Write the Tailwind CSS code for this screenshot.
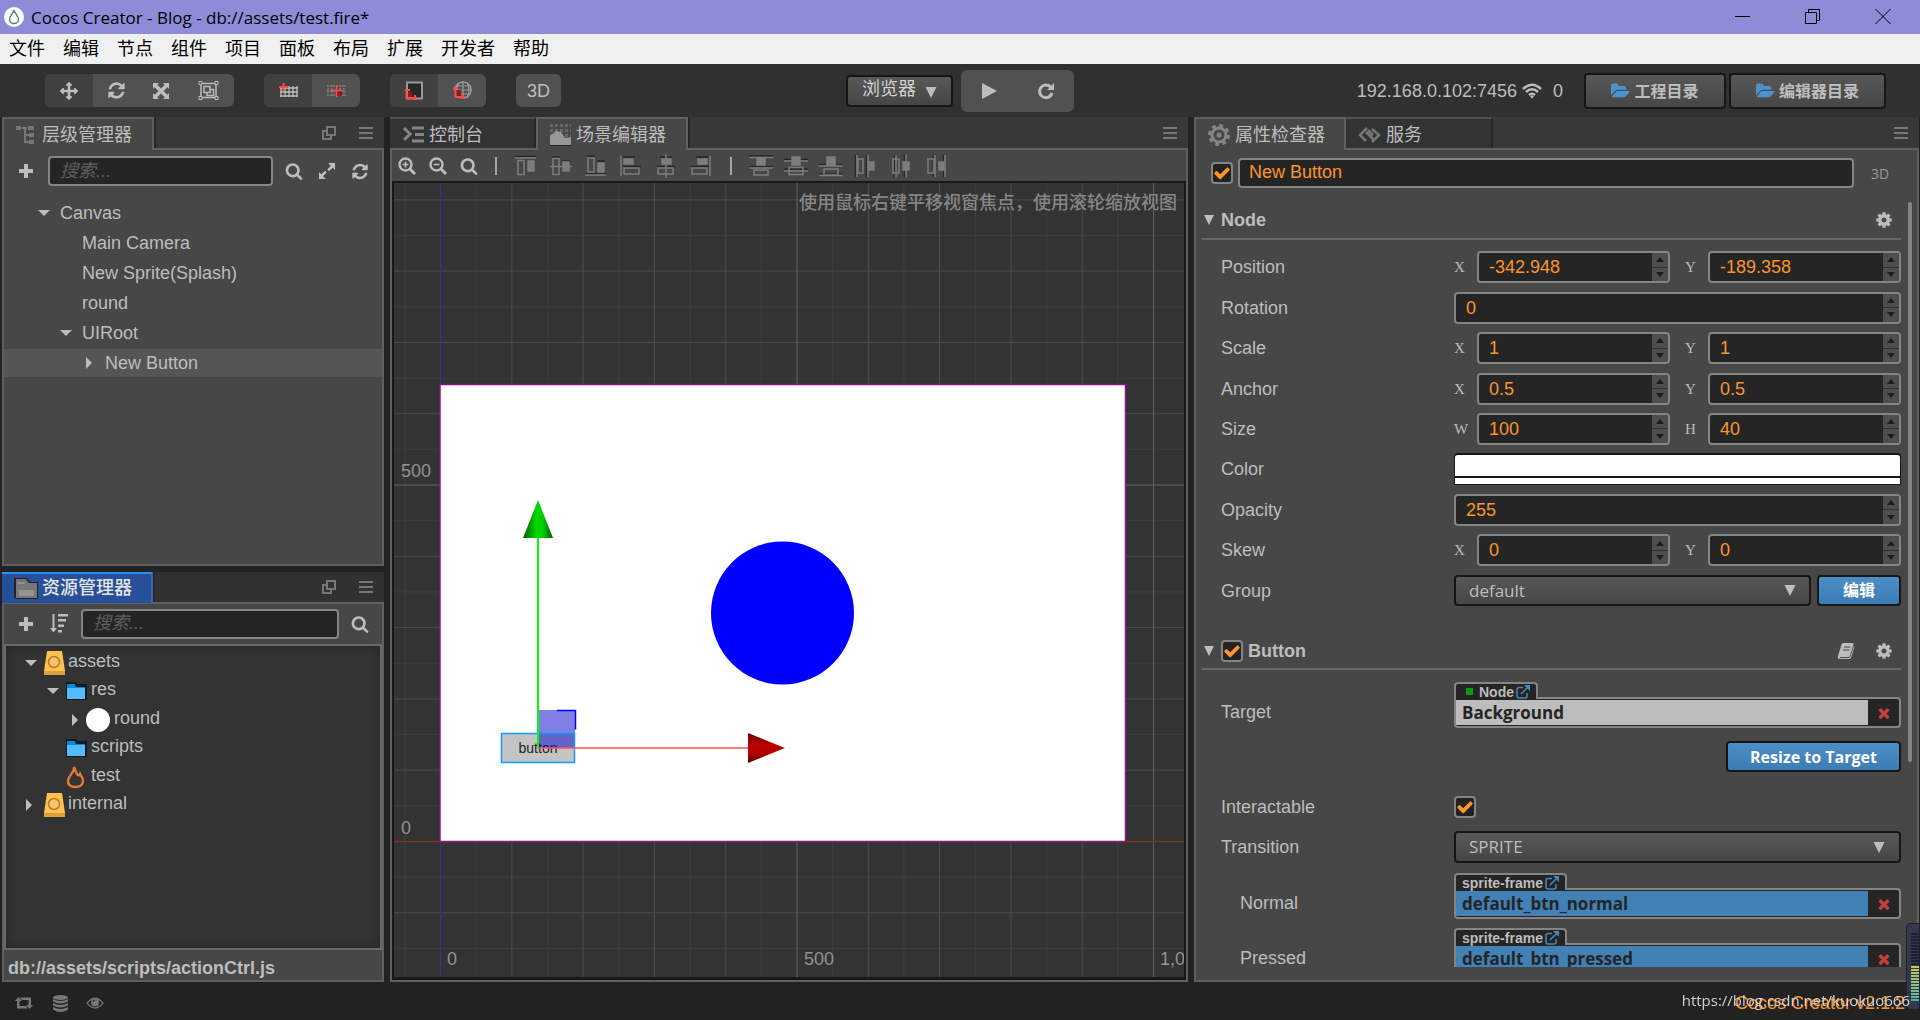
<!DOCTYPE html>
<html lang="zh-CN">
<head>
<meta charset="utf-8">
<title>Cocos Creator - Blog - db://assets/test.fire*</title>
<script src="https://cdn.jsdelivr.net/npm/@tailwindcss/browser@4"></script>
</head>
<body class="flex h-screen flex-col overflow-hidden bg-[#222] font-['Liberation_Sans','Noto_Sans_CJK_SC',sans-serif] text-[18px] leading-6 text-[#bdbdbd]">

<!-- Shared icons -->
<svg class="hidden" aria-hidden="true">
  <symbol id="i-arrows" viewBox="0 0 1792 1792"><path fill="currentColor" d="M1792 896q0 26-19 45l-256 256q-19 19-45 19t-45-19-19-45v-128h-384v384h128q26 0 45 19t19 45-19 45l-256 256q-19 19-45 19t-45-19l-256-256q-19-19-19-45t19-45 45-19h128v-384h-384v128q0 26-19 45t-45 19-45-19l-256-256q-19-19-19-45t19-45l256-256q19-19 45-19t45 19 19 45v128h384v-384h-128q-26 0-45-19t-19-45 19-45l256-256q19-19 45-19t45 19l256 256q19 19 19 45t-19 45-45 19h-128v384h384v-128q0-26 19-45t45-19 45 19l256 256q19 19 19 45z"/></symbol>
  <symbol id="i-refresh" viewBox="0 0 1792 1792"><path fill="currentColor" d="M1639 1056q0 5-1 7-64 268-268 434.5t-478 166.5q-146 0-282.5-55t-243.5-157l-129 129q-19 19-45 19t-45-19-19-45v-448q0-26 19-45t45-19h448q26 0 45 19t19 45-19 45l-137 137q71 66 161 102t187 36q134 0 250-65t186-179q11-17 53-117 8-23 30-23h192q13 0 22.5 9.5t9.5 22.5zm25-800v448q0 26-19 45t-45 19h-448q-26 0-45-19t-19-45 19-45l138-138q-148-137-349-137-134 0-250 65t-186 179q-11 17-53 117-8 23-30 23h-199q-13 0-22.5-9.5t-9.5-22.5v-7q65-268 270-434.5t480-166.5q146 0 284 55.5t245 156.5l130-129q19-19 45-19t45 19 19 45z"/></symbol>
  <symbol id="i-search" viewBox="0 0 1792 1792"><path fill="currentColor" d="M1216 832q0-185-131.5-316.5t-316.5-131.5-316.5 131.5-131.5 316.5 131.5 316.5 316.5 131.5 316.5-131.5 131.5-316.5zm512 832q0 52-38 90t-90 38q-54 0-90-38l-343-342q-179 124-399 124-143 0-273.5-55.5t-225-150-150-225-55.5-273.5 55.5-273.5 150-225 225-150 273.5-55.5 273.5 55.5 225 150 150 225 55.5 273.5q0 220-124 399l343 343q37 37 37 90z"/></symbol>
  <symbol id="i-gear" viewBox="0 0 1792 1792"><path fill="currentColor" d="M1152 896q0-106-75-181t-181-75-181 75-75 181 75 181 181 75 181-75 75-181zm512-109v222q0 12-8 23t-20 13l-185 28q-19 54-39 91 35 50 107 138 10 12 10 25t-9 23q-27 37-99 108t-94 71q-12 0-26-9l-138-108q-44 23-91 38-16 136-29 186-7 28-36 28h-222q-14 0-24.5-8.5t-11.5-21.5l-28-184q-49-16-90-37l-141 107q-10 9-25 9-14 0-25-11-126-114-165-168-7-10-7-23 0-12 8-23 15-21 51-66.5t54-70.5q-27-50-41-99l-183-27q-13-2-21-12.5t-8-23.5v-222q0-12 8-23t19-13l186-28q14-46 39-92-40-57-107-138-10-12-10-24 0-10 9-23 26-36 98.5-107.5t94.5-71.5q13 0 26 10l138 107q44-23 91-38 16-136 29-186 7-28 36-28h222q14 0 24.5 8.5t11.5 21.5l28 184q49 16 90 37l142-107q9-9 24-9 13 0 25 10 129 119 165 170 7 8 7 22 0 12-8 23-15 21-51 66.5t-54 70.5q26 50 41 98l183 28q13 2 21 12.5t8 23.5z"/></symbol>
  <symbol id="i-check" viewBox="0 0 1792 1792"><path fill="currentColor" d="M1671 566q0 40-28 68l-724 724-136 136q-28 28-68 28t-68-28l-136-136-362-362q-28-28-28-68t28-68l136-136q28-28 68-28t68 28l294 295 656-657q28-28 68-28t68 28l136 136q28 28 28 68z"/></symbol>
  <symbol id="i-open" viewBox="0 0 1920 1792"><path fill="currentColor" d="M1879 952q0 31-31 66l-336 396q-43 51-120.5 86.5t-143.5 35.5h-1088q-34 0-60.5-13t-26.5-43q0-31 31-66l336-396q43-51 120.5-86.5t143.5-35.5h1088q34 0 60.5 13t26.5 43zm-343-344v160h-832q-94 0-197 47.5t-164 119.5l-337 396-5 6q0-4-.5-12.5t-.5-12.5v-960q0-92 66-158t158-66h320q92 0 158 66t66 158v32h544q92 0 158 66t66 158z"/></symbol>
  <symbol id="i-times" viewBox="0 0 1792 1792"><path fill="currentColor" d="M1490 1322q0 40-28 68l-136 136q-28 28-68 28t-68-28l-294-294-294 294q-28 28-68 28t-68-28l-136-136q-28-28-28-68t28-68l294-294-294-294q-28-28-28-68t28-68l136-136q28-28 68-28t68 28l294 294 294-294q28-28 68-28t68 28l136 136q28 28 28 68t-28 68l-294 294 294 294q28 28 28 68z"/></symbol>
  <symbol id="i-plus" viewBox="0 0 16 16"><path fill="currentColor" d="M6 1.5q0-.5.5-.5h3q.5 0 .5.5V6h4.500q.5 0 .5.5v3q0 .5-.5.5H10v4.500q0 .5-.5.5h-3q-.5 0-.5-.5V10H1.500q-.5 0-.5-.5v-3q0-.5.5-.5H6z"/></symbol>
  <symbol id="i-popout" viewBox="0 0 14 14"><path fill="none" stroke="currentColor" stroke-width="2" d="M5 1h8v8H5zM4 5H1v8h8v-3"/></symbol>
  <symbol id="i-menu" viewBox="0 0 14 12"><path fill="currentColor" d="M0 0h14v2H0zM0 5h14v2H0zM0 10h14v2H0z"/></symbol>
  <symbol id="i-down" viewBox="0 0 12 6"><path fill="currentColor" d="M0 0h12L6 6z"/></symbol>
  <symbol id="i-right" viewBox="0 0 6 12"><path fill="currentColor" d="M0 0l6 6-6 6z"/></symbol>
  <symbol id="i-tri" viewBox="0 0 12 12"><path fill="currentColor" d="M0 0h12L6 12z"/></symbol>
  <symbol id="i-drive" viewBox="0 0 21 24"><path fill="#fec24d" d="M3 0h15l3 20H0z"/><path fill="#d9a13c" d="M0 20h21v4H0z"/><circle cx="10" cy="11" r="5.500" fill="#fec06a" stroke="#b17c2c" stroke-width="1.500"/></symbol>
  <symbol id="i-folder" viewBox="0 0 21 18"><path fill="#101a22" d="M0 0h10l1 2h10v16H0z"/><path fill="#0c87d8" d="M1 2h8l1 3h9v3H1z"/><path fill="#55bbff" d="M1 6h18v11H1z"/></symbol>
  <symbol id="i-ext" viewBox="0 0 14 14"><path fill="none" stroke="#4489c0" stroke-width="1.500" d="M7 2.500H3Q1 2.500 1 4.500V11q0 2 2 2h6q2 0 2-2V8M5 9l7-7"/><path fill="#4489c0" d="M8 0h6v6z"/></symbol>
</svg>

<!-- Title bar -->
<header class="flex h-[34px] shrink-0 items-center bg-[#8e8bd8] pl-1 font-['Open_Sans','Noto_Sans_CJK_SC',sans-serif] text-black">
  <svg class="size-5" viewBox="0 0 20 20"><circle cx="10" cy="10" r="10" fill="#fff"/><path d="M10 3C9 7 5.500 9 5.500 12.500a4.500 4 0 0 0 9 0C14.500 9 11 7 10 3z" fill="none" stroke="#6d7b80" stroke-width="1.500"/></svg>
  <h1 class="ml-[7px] flex-1 pt-0.5 text-[17px]">Cocos Creator - Blog - db://assets/test.fire*</h1>
  <div class="flex h-full pr-0.5">
    <button aria-label="最小化" class="flex h-full w-[70px] items-center justify-center"><svg class="size-4" viewBox="0 0 16 16"><path d="M0 7.500h15" stroke="#000"/></svg></button>
    <button aria-label="还原" class="flex h-full w-[70px] items-center justify-center"><svg class="size-4" viewBox="0 0 16 16" fill="none" stroke="#000"><path d="M.5 3.500h11v11H.5zM3.500 3V.5h11v11H12"/></svg></button>
    <button aria-label="关闭" class="flex h-full w-[70px] items-center justify-center"><svg class="size-4" viewBox="0 0 16 16" stroke="#000"><path d="M.5 0l15 15M15.500 0l-15 15"/></svg></button>
  </div>
</header>

<!-- Menu bar -->
<nav class="flex h-[30px] shrink-0 items-center gap-[18px] bg-[#f0f0f0] px-[9px] pb-px text-black">
  <a href="#">文件</a><a href="#">编辑</a><a href="#">节点</a><a href="#">组件</a><a href="#">项目</a><a href="#">面板</a><a href="#">布局</a><a href="#">扩展</a><a href="#">开发者</a><a href="#">帮助</a>
</nav>

<!-- Main toolbar -->
<div class="grid h-[53px] shrink-0 grid-cols-[1fr_auto_1fr] items-center bg-[#303030]">
  <div class="flex pl-[45px]">
    <div class="flex h-[33px] w-[189px] overflow-hidden rounded-md bg-[#515151]">
      <button aria-label="移动" class="flex w-12 items-center justify-center bg-[#414141]"><svg class="size-[18px]"><use href="#i-arrows"/></svg></button>
      <button aria-label="旋转" class="flex w-[46px] items-center justify-center"><svg class="size-[19px]"><use href="#i-refresh"/></svg></button>
      <button aria-label="缩放" class="flex w-11 items-center justify-center"><svg class="size-4" viewBox="0 0 16 16" fill="currentColor"><path d="M0 0h6L4.300 1.700 8 5.400l3.700-3.700L10 0h6v6l-1.700-1.700L10.600 8l3.700 3.700L16 10v6h-6l1.700-1.700L8 10.600l-3.700 3.700L6 16H0v-6l1.700 1.700L5.400 8 1.700 4.300 0 6z"/></svg></button>
      <button aria-label="矩形变换" class="flex flex-1 items-center justify-center"><svg class="h-[19px] w-[21px]" viewBox="0 0 21 19" fill="none" stroke="currentColor" stroke-width="1.500"><path d="M3 2.500h15v14H3zM6 5.500h6v6H6zM12 8.500h3.500v6H9v-3"/><path fill="#515151" stroke-width="1" d="M1 .5h3v3H1zM17 .5h3v3h-3zM1 15.500h3v3H1zM17 15.500h3v3h-3z"/></svg></button>
    </div>
    <div class="ml-[30px] flex h-[33px] overflow-hidden rounded-md bg-[#515151]">
      <button aria-label="锚点" class="flex w-12 items-center justify-center bg-[#414141]"><svg class="h-4 w-[19px]" viewBox="0 0 19 16"><path d="M2 3v11M6 3v11M10 3v11M14 3v11M18 3v11M1 5h18M1 9h18M1 13h18" stroke="#bdbdbd" stroke-width="1.300"/><path d="M4.500 0v8M0 4h9" stroke="#ff4a4a" stroke-width="2"/></svg></button>
      <button aria-label="中心点" class="flex w-12 items-center justify-center"><svg class="h-4 w-[19px]" viewBox="0 0 19 16"><path d="M1 2v11M5 2v11M13 2v11M17 2v11M0 3h19M0 12h19M0 8h19" stroke="#7b7b7b" stroke-width="1.500" stroke-dasharray="2 1"/><path fill="#8e1c1c" d="M10 8h5v5h-5z"/><path d="M9.500 2v12M3 7.500h12" stroke="#ff4a4a" stroke-width="1.500"/></svg></button>
    </div>
    <div class="ml-[30px] flex h-[33px] overflow-hidden rounded-md bg-[#515151]">
      <button aria-label="本地坐标" class="flex w-12 items-center justify-center bg-[#414141]"><svg class="h-[19px] w-[18px]" viewBox="0 0 18 19"><path d="M2 1.500h15v16H2z" fill="#272727" stroke="#999" stroke-width="2"/><path d="M1.500 8v9H12M0 9h5M10 14v5" stroke="#ff4a4a" stroke-width="2" fill="none"/><path fill="#8e1c1c" d="M3 11h4v5H3z"/></svg></button>
      <button aria-label="世界坐标" class="flex w-12 items-center justify-center"><svg class="size-[19px]" viewBox="0 0 19 19"><path d="M10 0v18M6 1.500Q2 9 6 17M14 1.500Q18 9 14 17M2 5h16M1 9h18M2 13h16" stroke="#999" fill="none" stroke-width="1.200"/><circle cx="10" cy="9" r="8" stroke="#999" fill="none" stroke-width="1.500"/><path fill="#8e1c1c" d="M3 9h5v6H3z"/><path d="M2.500 6v10H12M0 7h5M10 13v5" stroke="#ff4a4a" stroke-width="2" fill="none"/></svg></button>
    </div>
    <button class="ml-[30px] h-[33px] w-[45px] rounded-md bg-[#515151]">3D</button>
  </div>
  <div class="flex items-center gap-2">
    <div class="relative">
      <select aria-label="预览平台" class="h-8 w-[107px] appearance-none rounded border-2 border-[#161616] bg-linear-to-b from-[#585858] to-[#464646] pb-1 pl-3.5 text-[#d0d0d0]"><option>浏览器</option></select>
      <svg class="pointer-events-none absolute top-3 right-4 h-[11px] w-3"><use href="#i-tri"/></svg>
    </div>
    <div class="flex h-[42px] w-[113px] rounded-md bg-[#515151]">
      <button aria-label="运行" class="flex flex-1 items-center justify-center"><svg class="h-4 w-[15px]" viewBox="0 0 15 16"><path fill="currentColor" d="M0 0l15 8-15 8z"/></svg></button>
      <button aria-label="重新加载" class="flex flex-1 items-center justify-center"><svg class="size-[18px]" viewBox="0 0 18 18"><path d="M13.500 5A6.300 6.300 0 1 0 15 11" fill="none" stroke="currentColor" stroke-width="3"/><path fill="currentColor" d="M17 1v7h-7z"/></svg></button>
    </div>
  </div>
  <div class="flex items-center justify-end pr-[34px]">
    <span>192.168.0.102:7456</span>
    <svg class="ml-[5px] h-4 w-5" viewBox="0 0 20 16" fill="none" stroke="currentColor" stroke-width="2.500"><path d="M1 6q9-8.500 18 0M4 9q6-5.500 12 0M7 12q3-2.500 6 0"/><path fill="currentColor" stroke="none" d="M8 13.300q2-1.500 4 0l-2 2.500z"/></svg>
    <span class="ml-[11px]">0</span>
    <button class="ml-[21px] flex h-9 w-[142px] items-center justify-center gap-1 rounded border-2 border-[#161616] bg-linear-to-b from-[#585858] to-[#464646] text-[16px] font-bold"><svg class="h-[18px] w-[19px] text-[#4b93cc]"><use href="#i-open"/></svg><span class="pt-0.5">工程目录</span></button>
    <button class="ml-[3px] flex h-9 w-[157px] items-center justify-center gap-1 rounded border-2 border-[#161616] bg-linear-to-b from-[#585858] to-[#464646] text-[16px] font-bold"><svg class="h-[18px] w-[19px] text-[#4b93cc]"><use href="#i-open"/></svg><span class="pt-0.5">编辑器目录</span></button>
  </div>
</div>

<!-- Workspace -->
<main class="flex min-h-0 flex-1 gap-1.5 pr-px pl-0.5">

  <!-- Left column -->
  <div class="flex w-[382px] shrink-0 flex-col gap-1.5">
    <section class="flex min-h-0 flex-[448] flex-col">
      <div class="flex h-[31px] shrink-0 bg-[#383838]">
        <h2 class="relative z-10 flex h-[33px] w-[152px] items-center gap-2 border-2 border-b-0 border-[#606060] bg-[#474747] pl-3"><svg class="size-[18px] shrink-0" viewBox="0 0 18 18"><path fill="#777" d="M0 0h5v4H0zM6 1h5v2H6zM12 0h6v4h-6zM13 7h5v4h-5zM13 14h5v4h-5zM8 3h2v14H8zM10 8h3v2h-3zM10 15h3v2h-3z"/></svg>层级管理器</h2>
        <div class="flex flex-1 items-center justify-end gap-[23px] border-l-2 border-[#262626] pr-[11px] text-[#777]"><svg class="size-3.5"><use href="#i-popout"/></svg><svg class="h-3 w-3.5"><use href="#i-menu"/></svg></div>
      </div>
      <div class="flex min-h-0 flex-1 flex-col border-2 border-[#606060] bg-[#474747]">
        <div class="mt-1.5 mb-[13px] flex h-[30px] items-center">
          <button aria-label="新建节点" class="flex w-11 justify-center"><svg class="size-4"><use href="#i-plus"/></svg></button>
          <input aria-label="搜索节点" placeholder="搜索..." class="h-[30px] w-[225px] rounded border-2 border-[#858585] bg-[#252525] px-2.5 text-[18px] italic outline-none placeholder:text-[#5e5e5e]">
          <button aria-label="搜索" class="ml-3 flex w-[18px] justify-center"><svg class="size-[18px]"><use href="#i-search"/></svg></button>
          <button aria-label="展开" class="ml-4 flex w-4 justify-center"><svg class="size-4" viewBox="0 0 16 16"><path fill="currentColor" d="M9 0h7v7l-2.300-2.300-3.700 3.600L8.300 6.600l3.400-3.800zM0 9l2.300 2.300L6 7.700l1.700 1.700L4 13.300 7 16H0z"/></svg></button>
          <button aria-label="刷新" class="ml-4 flex w-[18px] justify-center"><svg class="size-[19px]"><use href="#i-refresh"/></svg></button>
        </div>
        <ul>
          <li class="mb-0.5 flex h-7 items-center gap-2.5 pl-[34px]"><svg class="h-1.5 w-3"><use href="#i-down"/></svg>Canvas</li>
          <li class="mb-0.5 flex h-7 items-center pl-[78px]">Main Camera</li>
          <li class="mb-0.5 flex h-7 items-center pl-[78px]">New Sprite(Splash)</li>
          <li class="mb-0.5 flex h-7 items-center pl-[78px]">round</li>
          <li class="mb-0.5 flex h-7 items-center gap-2.5 pl-14"><svg class="h-1.5 w-3"><use href="#i-down"/></svg>UIRoot</li>
          <li class="mb-0.5 flex h-7 items-center gap-[13px] bg-[#555] pl-[82px]"><svg class="h-3 w-1.5"><use href="#i-right"/></svg>New Button</li>
        </ul>
      </div>
    </section>

    <section class="flex min-h-0 flex-[410] flex-col">
      <div class="flex h-[30px] shrink-0 bg-[#313131]">
        <h2 class="relative z-10 flex h-[31px] w-[151px] items-center gap-1 border-t-2 border-r-2 border-t-[#2c8ff0] border-r-[#3767b5] bg-[#28509a] pl-3 font-medium text-[#e4e4e4]"><svg class="h-[21px] w-6 shrink-0" viewBox="0 0 24 21"><path fill="#222" d="M0 0h13l3 4h8v17H2L0 19z"/><path fill="#777" d="M2 1h10l3 4h8v15H2z"/><path fill="#939393" d="M5 12h15v6H5zM4 4h7v2H4z"/></svg>资源管理器</h2>
        <div class="flex flex-1 items-center justify-end gap-[23px] border-l-2 border-[#262626] pr-[11px] text-[#777]"><svg class="size-3.5"><use href="#i-popout"/></svg><svg class="h-3 w-3.5"><use href="#i-menu"/></svg></div>
      </div>
      <div class="flex min-h-0 flex-1 flex-col border-2 border-[#606060] bg-[#474747]">
        <div class="flex h-10 shrink-0 items-center pl-3.5">
          <button aria-label="新建资源" class="flex w-4 justify-center"><svg class="size-4"><use href="#i-plus"/></svg></button>
          <button aria-label="排序" class="ml-4 flex w-[18px] justify-center"><svg class="h-[19px] w-[18px]" viewBox="0 0 18 19" fill="currentColor"><path d="M2.500 0h2v14H7l-3.500 4.500L0 14h2.500zM8 0h10v2.500H8zM8 5h8v2.500H8zM8 10.500h6V13H8zM8 16h4v2.500H8z"/></svg></button>
          <input aria-label="搜索资源" placeholder="搜索..." class="ml-[13px] h-[30px] w-[258px] rounded border-2 border-[#858585] bg-[#252525] px-2.5 text-[18px] italic outline-none placeholder:text-[#5e5e5e]">
          <button aria-label="搜索" class="ml-3 flex w-[18px] justify-center"><svg class="size-[18px]"><use href="#i-search"/></svg></button>
        </div>
        <div class="flex-1 border-2 border-[#6a6a6a] bg-[#333] pt-px shadow-[inset_0_0_10px_rgba(0,0,0,0.3)]">
          <ul class="grid h-[171px] auto-rows-fr">
            <li class="flex items-center gap-[3px] pl-[19px]"><svg class="mt-1 h-1.5 w-3"><use href="#i-down"/></svg><svg class="mt-1 ml-1 h-6 w-[21px]"><use href="#i-drive"/></svg>assets</li>
            <li class="flex items-center gap-1 pl-[41px]"><svg class="mt-1 h-1.5 w-3"><use href="#i-down"/></svg><svg class="mt-1 ml-[3px] h-[18px] w-[21px]"><use href="#i-folder"/></svg>res</li>
            <li class="flex items-center gap-1 pl-[66px]"><svg class="mt-1 h-3 w-1.5"><use href="#i-right"/></svg><span class="mt-1 ml-1 size-6 rounded-full bg-white"></span>round</li>
            <li class="flex items-center gap-1 pl-[60px]"><svg class="mt-1 h-[18px] w-[21px]"><use href="#i-folder"/></svg>scripts</li>
            <li class="flex items-center gap-1 pl-[60px]"><svg class="mt-1 h-6 w-[21px]" viewBox="0 0 21 24"><path d="M8 2c1 5-6 9-6 14 0 4 3 6 7.500 6s7.500-2.500 7.500-6.500c0-3-2-4-3-6.500-1 2-2 2-3 0S9 5 8 2z" fill="none" stroke="#e07a3c" stroke-width="2.400"/></svg>test</li>
            <li class="flex items-center gap-[3px] pl-5"><svg class="mt-1 h-3 w-1.5"><use href="#i-right"/></svg><svg class="mt-1 ml-[9px] h-6 w-[21px]"><use href="#i-drive"/></svg>internal</li>
          </ul>
        </div>
        <p class="flex h-[30px] items-center pt-1.5 pl-1 font-bold">db://assets/scripts/actionCtrl.js</p>
      </div>
    </section>
  </div>

  <!-- Scene editor -->
  <section class="flex min-w-0 flex-1 flex-col">
    <div class="flex h-[31px] shrink-0 bg-[#383838]">
      <h2 class="flex w-[146px] items-center gap-[5px] border-t-2 border-r-2 border-t-[#4f4f4f] border-r-[#262626] bg-[#333] pt-0.5 pl-[13px]"><svg class="h-[17px] w-[21px] shrink-0" viewBox="0 0 21 17"><path d="M1 2l6 6-6 6M9 2h12M12 8.500h9M9 15h12" fill="none" stroke="#858585" stroke-width="3"/></svg>控制台</h2>
      <h2 class="relative z-10 flex h-[33px] w-[152px] items-center gap-[5px] border-2 border-b-0 border-[#606060] bg-[#474747] pl-3"><svg class="h-[22px] w-[21px] shrink-0" viewBox="0 0 21 22"><path stroke="#666" stroke-width="3" stroke-dasharray="3 2" d="M0 1.500h21M0 6.500h21M0 11.500h21"/><path fill="#979797" d="M0 12l6-5 5 1 4 6 6-1v8H0z"/><path fill="#222" d="M0 21h21v1H0z"/></svg>场景编辑器</h2>
      <div class="flex flex-1 items-center justify-end border-l-2 border-[#262626] pr-[11px] text-[#777]"><svg class="h-3 w-3.5"><use href="#i-menu"/></svg></div>
    </div>
    <div class="flex min-h-0 flex-1 flex-col border-2 border-[#606060] bg-[#474747]">
      <div class="flex h-[31px] shrink-0 items-center pl-1.5">
        <button aria-label="放大" class="w-[31px]"><svg class="size-[18px]" viewBox="0 0 18 18"><circle cx="7.500" cy="7.500" r="6" fill="none" stroke="currentColor" stroke-width="2.400"/><path d="M12 12l5 5" stroke="currentColor" stroke-width="3"/><path d="M4.500 7.500h6M7.500 4.500v6" stroke="currentColor" stroke-width="1.600"/></svg></button>
        <button aria-label="缩小" class="w-[31px]"><svg class="size-[18px]" viewBox="0 0 18 18"><circle cx="7.500" cy="7.500" r="6" fill="none" stroke="currentColor" stroke-width="2.400"/><path d="M12 12l5 5" stroke="currentColor" stroke-width="3"/><path d="M4.500 7.500h6" stroke="currentColor" stroke-width="1.600"/></svg></button>
        <button aria-label="重置缩放" class="w-[18px]"><svg class="size-[18px]"><use href="#i-search"/></svg></button>
        <span class="ml-[17px] h-[18px] w-0.5 bg-[#a5a5a5]"></span>
        <div class="ml-4 flex gap-[11px] text-[#7d7d7d]">
          <svg class="size-6" viewBox="0 0 24 24" fill="none" stroke="currentColor" stroke-width="1.500"><path stroke="#272727" d="M2 2.500h21"/><path d="M2 4h21M5 6.500h6v14H5z"/><path fill="currentColor" d="M15 7h6v10h-6z"/></svg>
          <svg class="size-6" viewBox="0 0 24 24" fill="none" stroke="currentColor" stroke-width="1.500"><path stroke="#272727" d="M4 3h8M14 7h8"/><path d="M2 12.500h22M5 4.500h6v16H5z"/><path fill="currentColor" d="M15 8h6v9h-6z"/></svg>
          <svg class="size-6" viewBox="0 0 24 24" fill="none" stroke="currentColor" stroke-width="1.500"><path stroke="#272727" d="M4 2h8M14 7h8M2 19.500h21"/><path d="M2 21h21M5 4h6v14H5z"/><path fill="currentColor" d="M15 9h6v9h-6z"/></svg>
          <svg class="size-6" viewBox="0 0 24 24" fill="none" stroke="currentColor" stroke-width="1.500"><path stroke="#272727" d="M5 3h12M5 12.500h18"/><path d="M3 2v20M6 14h15v6H6z"/><path fill="currentColor" d="M6 5h9v5H6z"/></svg>
          <svg class="size-6" viewBox="0 0 24 24" fill="none" stroke="currentColor" stroke-width="1.500"><path stroke="#272727" d="M7 3h12M4 12.500h18"/><path d="M13 0v24M5 14h15v6H5z"/><path fill="currentColor" d="M9 5h9v5H9z"/></svg>
          <svg class="size-6" viewBox="0 0 24 24" fill="none" stroke="currentColor" stroke-width="1.500"><path stroke="#272727" d="M8 3h12M3 12.500h18"/><path d="M22 2v20M4 14h15v6H4z"/><path fill="currentColor" d="M10 5h9v5h-9z"/></svg>
        </div>
        <span class="ml-[18px] h-[18px] w-0.5 bg-[#a5a5a5]"></span>
        <div class="ml-[17px] flex gap-[11px] text-[#7d7d7d]">
          <svg class="size-6" viewBox="0 0 24 24" fill="none" stroke="currentColor" stroke-width="1.500"><path stroke="#272727" d="M0 2h24M0 12.500h24"/><path d="M0 3.500h24M0 14h24M5 16h14v5H5z"/><path fill="currentColor" d="M8 4h8v7H8z"/></svg>
          <svg class="size-6" viewBox="0 0 24 24" fill="none" stroke="currentColor" stroke-width="1.500"><path stroke="#272727" d="M0 5.500h24M0 15h24"/><path d="M0 7h24M0 17h24M5 13.500h14v7H5z"/><path fill="currentColor" d="M8 3h8v8H8z"/></svg>
          <svg class="size-6" viewBox="0 0 24 24" fill="none" stroke="currentColor" stroke-width="1.500"><path stroke="#272727" d="M0 10.500h24M0 20h24"/><path d="M0 12h24M0 21.500h24M5 15h14v6H5z"/><path fill="currentColor" d="M8 3h8v8H8z"/></svg>
          <svg class="size-6" viewBox="0 0 24 24" fill="none" stroke="currentColor" stroke-width="1.500"><path stroke="#272727" d="M1.500 1v22M12.500 1v22"/><path d="M3 1v22M14 1v22M4 5h5v14H4z"/><path fill="currentColor" d="M14 8h6v8h-6z"/></svg>
          <svg class="size-6" viewBox="0 0 24 24" fill="none" stroke="currentColor" stroke-width="1.500"><path stroke="#272727" d="M5.500 1v22M15.500 1v22"/><path d="M7 1v22M17 1v22M4 5h6v14H4z"/><path fill="currentColor" d="M14 8h6v8h-6z"/></svg>
          <svg class="size-6" viewBox="0 0 24 24" fill="none" stroke="currentColor" stroke-width="1.500"><path stroke="#272727" d="M9.500 1v22M19.500 1v22"/><path d="M11 1v22M21 1v22M4 5h6v14H4z"/><path fill="currentColor" d="M15 8h5v8h-5z"/></svg>
        </div>
      </div>
      <div class="relative min-h-0 flex-1 overflow-hidden border-2 border-b-[3px] border-[#181818] bg-[#333]">
        <svg class="absolute inset-0 size-full" font-family="'Liberation Sans', sans-serif">
          <defs>
            <pattern id="g50" x="46" y="658" width="35.65" height="35.65" patternUnits="userSpaceOnUse"><path d="M.5 0v36M0 .5h36" stroke="#fff" stroke-opacity=".045"/></pattern>
            <pattern id="g100" x="46" y="658" width="71.3" height="71.3" patternUnits="userSpaceOnUse"><path d="M.5 0v72M0 .5h72" stroke="#fff" stroke-opacity=".08"/></pattern>
            <pattern id="g500" x="46" y="658" width="356.5" height="356.5" patternUnits="userSpaceOnUse"><path d="M.5 0v357M0 .5h357" stroke="#fff" stroke-opacity=".13"/></pattern>
            <linearGradient id="gc"><stop offset="0" stop-color="#005c00"/><stop offset=".45" stop-color="#00d800"/><stop offset=".65" stop-color="#00d000"/><stop offset="1" stop-color="#005c00"/></linearGradient>
            <linearGradient id="rc" x2="0" y2="1"><stop offset="0" stop-color="#600"/><stop offset=".4" stop-color="#c00000"/><stop offset=".7" stop-color="#b00000"/><stop offset="1" stop-color="#500"/></linearGradient>
          </defs>
          <rect width="100%" height="100%" fill="url(#g50)"/><rect width="100%" height="100%" fill="url(#g100)"/><rect width="100%" height="100%" fill="url(#g500)"/>
          <path d="M46.500 0v2000" stroke="#333399"/><path d="M0 658.500h4000" stroke="#7a3333" stroke-width="1.500"/>
          <rect x="46" y="201.500" width="685.5" height="457" fill="#fff" stroke="#901090" stroke-width="1.500"/>
          <circle cx="388.500" cy="430" r="71.500" fill="#00f"/>
          <rect x="107.500" y="550.500" width="73" height="29" fill="#c4c4c4"/>
          <text x="144" y="570" font-size="14" text-anchor="middle" fill="#222">button</text>
          <rect x="144" y="527" width="37" height="38" fill="#0000cd" fill-opacity=".5"/>
          <path d="M163 527.500h18.500v19" fill="none" stroke="#00f" stroke-width="1.500"/>
          <rect x="107.500" y="550.500" width="73" height="29" fill="none" stroke="#0c9bff" stroke-width="1.500"/>
          <path d="M144 355v210" stroke="#0f0" stroke-width="2"/><path d="M144 565h210" stroke="#ff5555" stroke-width="1.500"/>
          <path fill="url(#gc)" d="M144 317l15 38h-30z"/><path fill="url(#rc)" d="M354 550l37 15-37 15z"/>
          <g fill="#929292" font-size="18"><text x="7" y="294">500</text><text x="7" y="651">0</text><text x="53" y="782">0</text><text x="410" y="782">500</text><text x="766" y="782">1,000</text></g>
        </svg>
        <p class="absolute top-2 right-[7px] font-medium text-[#868686]">使用鼠标右键平移视窗焦点，使用滚轮缩放视图</p>
      </div>
    </div>
  </section>

  <!-- Inspector -->
  <section class="flex w-[725px] shrink-0 flex-col">
    <div class="flex h-[31px] shrink-0 bg-[#383838]">
      <h2 class="relative z-10 flex h-[33px] w-[152px] items-center gap-[5px] border-2 border-b-0 border-[#606060] bg-[#474747] pl-3"><svg class="size-[22px] shrink-0 text-[#858585]" viewBox="0 0 22 22"><circle cx="11" cy="11" r="7" fill="none" stroke="currentColor" stroke-width="3"/><circle cx="11" cy="11" r="9.500" fill="none" stroke="currentColor" stroke-width="3" stroke-dasharray="3.700 3.760"/><circle cx="11" cy="11" r="2.500" fill="currentColor"/></svg>属性检查器</h2>
      <h2 class="flex w-[147px] items-center gap-[5px] border-t-2 border-r-2 border-t-[#4f4f4f] border-r-[#262626] bg-[#333] pt-0.5 pl-3"><svg class="h-[18px] w-[23px] shrink-0" viewBox="0 0 23 18"><path d="M9 2L2 9l6 6M8 6l7 7M14 3l7 6-7 7M10 4l5 5" fill="none" stroke="#777" stroke-width="2.500"/></svg>服务</h2>
      <div class="flex flex-1 items-center justify-end pr-[11px] text-[#777]"><svg class="h-3 w-3.5"><use href="#i-menu"/></svg></div>
    </div>
    <div class="relative min-h-0 flex-1 border-2 border-[#606060] bg-[#474747] pr-4 pb-[13px] pl-1.5">
      <div class="h-full overflow-hidden">
        <div class="mt-2 flex h-[30px] items-center pl-[9px]">
          <span class="relative size-[22px]"><input type="checkbox" checked aria-label="启用节点" class="peer block size-[22px] appearance-none rounded border-2 border-[#858585] bg-[#222]"><svg class="pointer-events-none absolute inset-0.5 hidden size-[18px] text-[#fd942b] peer-checked:block"><use href="#i-check"/></svg></span>
          <input aria-label="节点名称" value="New Button" class="ml-[5px] h-[30px] min-w-0 flex-1 rounded border-2 border-[#858585] bg-[#252525] px-[9px] pb-0.5 text-[#fd942b] outline-none">
          <span class="w-[47px] pt-px pl-[17px] font-['Open_Sans',sans-serif] text-[14px] text-[#9a9a9a]">3D</span>
        </div>
        <div class="mt-3.5 flex h-[38px] items-center border-b-2 border-[#686868]">
          <svg class="ml-0.5 size-2.5"><use href="#i-tri"/></svg>
          <h3 class="ml-[7px] flex-1 font-bold">Node</h3>
          <button aria-label="节点设置" class="mr-2"><svg class="size-[18px]"><use href="#i-gear"/></svg></button>
        </div>
        <div id="node-props" class="mt-[7px] grid h-[364px] auto-rows-fr grid-cols-1"></div>

        <div class="mt-[22px] flex h-[37px] items-center border-b-2 border-[#686868]">
          <svg class="ml-0.5 size-2.5"><use href="#i-tri"/></svg>
          <span class="relative ml-[7px] size-[22px]"><input id="btn-on" type="checkbox" checked class="peer block size-[22px] appearance-none rounded border-2 border-[#858585] bg-[#222]"><svg class="pointer-events-none absolute inset-0.5 hidden size-[18px] text-[#fd942b] peer-checked:block"><use href="#i-check"/></svg></span>
          <label for="btn-on" class="ml-[5px] flex-1 font-bold">Button</label>
          <button aria-label="文档" class="mr-5"><svg class="h-4 w-[18px]" viewBox="0 0 18 16"><path fill="currentColor" d="M6 0h9.500q1.500 0 1 1.500L13 12.500q-.5 1.500-2 1.500H3q-1 0 0 1h8q2 0 2.700-2L17 3l.5 1-3 9.500Q14 16 11.500 16H3Q0 16 1 13L4.500 1.500Q5 0 6 0z"/><path stroke="#474747" stroke-width="1.200" d="M7 4h6.500M6 7h6.500"/></svg></button>
          <button aria-label="组件设置" class="mr-2"><svg class="size-[18px]"><use href="#i-gear"/></svg></button>
        </div>
        <div id="target" class="mt-3"></div>
        <div class="mt-[13px] flex justify-end"><button class="h-[31px] w-[175px] rounded border-2 border-[#161616] bg-linear-to-b from-[#4c8fc6] to-[#3b7cb5] font-['Open_Sans',sans-serif] text-[16px] leading-6 font-bold text-white">Resize to Target</button></div>
        <div class="mt-[15px] flex h-10 items-center pl-[19px]">
          <label for="inter" class="w-[233px]">Interactable</label>
          <span class="relative size-[22px]"><input id="inter" type="checkbox" checked class="peer block size-[22px] appearance-none rounded border-2 border-[#858585] bg-[#222]"><svg class="pointer-events-none absolute inset-0.5 hidden size-[18px] text-[#fd942b] peer-checked:block"><use href="#i-check"/></svg></span>
        </div>
        <div class="flex h-10 items-center pl-[19px]">
          <label for="trans" class="w-[233px]">Transition</label>
          <span class="relative flex-1"><select id="trans" class="block h-8 w-full appearance-none rounded border-2 border-[#161616] bg-linear-to-b from-[#585858] to-[#464646] pl-[13px] font-['Open_Sans',sans-serif] text-[17px] leading-[26px]"><option>SPRITE</option></select><svg class="pointer-events-none absolute top-[11px] right-4 h-[11px] w-3"><use href="#i-tri"/></svg></span>
        </div>
        <div id="sprites" class="mt-[6px] flex flex-col gap-[9px]"></div>
      </div>
      <div class="absolute top-[52px] right-[5px] h-[560px] w-1 rounded-full bg-[#858585]"></div>
    </div>
  </section>
</main>

<!-- Status bar -->
<footer class="flex h-[38px] shrink-0 items-center gap-5 pt-1 pl-[15px] text-[#777]">
  <svg class="h-3 w-[18px]" viewBox="0 0 18 12" fill="currentColor"><path d="M3.500 0L7 4H4.500v5H11l2 2.500H2V4H0zM14.500 12L11 8h2.500V3H7L5 .5h11V8h2z"/></svg>
  <svg class="h-[17px] w-[15px]" viewBox="0 0 15 17" fill="currentColor"><ellipse cx="7.500" cy="2.500" rx="7.500" ry="2.500"/><path d="M0 4q7.500 4 15 0v2.500q-7.500 4-15 0zM0 8q7.500 4 15 0v2.500q-7.500 4-15 0zM0 12q7.500 4 15 0v2.500q-7.500 5-15 0z"/></svg>
  <svg class="-ml-0.5 h-3 w-[18px]" viewBox="0 0 18 12"><path fill="none" stroke="currentColor" stroke-width="1.300" d="M1 6.200Q9-4 17 6.200 9 16 1 6.200z"/><circle cx="9" cy="5.500" r="4" fill="currentColor"/><path d="M7 5q0-2 2-2" stroke="#222" fill="none"/></svg>
  <p class="ml-auto pr-[15px] text-[#fd942b]">Cocos Creator v2.1.2</p>
</footer>

<!-- Desktop overlays -->
<div class="fixed right-0 bottom-2.5 h-[87px] w-3.5 rounded-l border border-[#1c2030] bg-[#33384d]">
  <div class="mt-[9px] ml-1 h-[33px] bg-[repeating-linear-gradient(#1d2130_0_2px,#33384d_2px_3px)]"></div>
  <div class="ml-1 h-9 bg-linear-to-b from-[#c5c948] to-[#3fb8a0]"><div class="size-full bg-[repeating-linear-gradient(transparent_0_2px,#33384d_2px_3px)]"></div></div>
</div>
<p class="fixed right-2.5 bottom-2 font-['Open_Sans',sans-serif] text-[15px] text-[#d2d2d2]">https://blog.csdn.net/kuokuo666</p>

<script>
const arrow = (d) => `<svg class="h-[5px] w-2" viewBox="0 0 8 5"><path fill="#1c1c1c" d="${d}"/></svg>`;
const num = (label, value) => `<div class="flex h-8 min-w-0 flex-1 overflow-hidden rounded border-2 border-[#858585] bg-[#252525]">
  <input aria-label="${label}" value="${value}" class="min-w-0 flex-1 pl-2.5 text-[#fd942b] outline-none">
  <div class="flex w-4 flex-col bg-[#4e4e4e]"><button aria-label="${label} +" class="flex flex-1 items-center justify-center border-b border-[#303030]">${arrow('M0 5l4-5 4 5z')}</button><button aria-label="${label} -" class="flex flex-1 items-center justify-center">${arrow('M0 0h8L4 5z')}</button></div></div>`;
const axis = (a, label, value) => `<span class="w-[23px] shrink-0 font-['Liberation_Serif',serif] text-[15px]">${a}</span>${num(label + ' ' + a, value)}`;
const pair = (label, a, x, b, y) => `${axis(a, label, x)}<span class="w-[15px] shrink-0"></span>${axis(b, label, y)}`;
const row = (label, body) => `<div class="flex items-center pl-[19px]"><span class="w-[233px] shrink-0">${label}</span>${body}</div>`;
document.getElementById('node-props').innerHTML = [
  row('Position', pair('Position', 'X', '-342.948', 'Y', '-189.358')),
  row('Rotation', num('Rotation', '0')),
  row('Scale', pair('Scale', 'X', '1', 'Y', '1')),
  row('Anchor', pair('Anchor', 'X', '0.5', 'Y', '0.5')),
  row('Size', pair('Size', 'W', '100', 'H', '40')),
  row('Color', `<button aria-label="Color" class="flex h-8 flex-1 flex-col overflow-hidden rounded-t border border-t-2 border-[#161616] bg-[#161616]"><span class="mb-0.5 w-full flex-1 bg-white"></span><span class="h-1.5 w-full bg-white"></span></button>`),
  row('Opacity', num('Opacity', '255')),
  row('Skew', pair('Skew', 'X', '0', 'Y', '0')),
  row('Group', `<span class="relative flex-1"><select aria-label="Group" class="block h-[31px] w-full appearance-none rounded border-2 border-[#161616] bg-linear-to-b from-[#585858] to-[#464646] pl-[13px] font-['Open_Sans',sans-serif] text-[17px] leading-[26px]"><option>default</option></select><svg class="pointer-events-none absolute top-2.5 right-[15px] h-[11px] w-3"><use href="#i-tri"/></svg></span><button class="ml-1.5 h-[31px] w-[84px] rounded border-2 border-[#161616] bg-linear-to-b from-[#4c8fc6] to-[#3b7cb5] text-[16px] font-bold text-white">编辑</button>`)
].join('');
const asset = (label, kind, value, indent, fill, dot) => `<div class="flex h-[46px] shrink-0 ${indent}"><span class="shrink-0 pt-[18px]">${label}</span>
  <div class="ml-auto flex w-[447px] flex-col items-start font-['Open_Sans',sans-serif] font-bold">
    <div class="relative z-10 -mb-0.5 flex h-[17px] items-center gap-0.5 rounded-t border-2 border-b-0 border-[#858585] bg-[#252525] px-1.5 font-['Liberation_Sans',sans-serif] text-[14px] leading-[14px]">${dot}${kind}<svg class="size-3.5"><use href="#i-ext"/></svg></div>
    <div class="flex h-[31px] w-full overflow-hidden rounded-b rounded-tr border-2 border-[#858585] bg-[#252525]"><span class="flex-1 border-y border-[#252525] pl-1.5 text-[17px] leading-[26px] text-[#252525] ${fill}">${value}</span><button aria-label="清除 ${label}" class="flex w-[31px] items-center justify-center"><svg class="size-4 text-[#c5403c]"><use href="#i-times"/></svg></button></div>
  </div></div>`;
document.getElementById('target').innerHTML = asset('Target', 'Node', 'Background', 'pl-[19px]', 'bg-[#bdbdbd]', '<span class="mx-1 size-[7px] bg-[#0a9a0a]"></span>');
document.getElementById('sprites').innerHTML =
  asset('Normal', 'sprite-frame', 'default_btn_normal', 'pl-[38px]', 'bg-[#4281b6]', '') +
  asset('Pressed', 'sprite-frame', 'default_btn_pressed', 'pl-[38px]', 'bg-[#4281b6]', '');
</script>
</body>
</html>
